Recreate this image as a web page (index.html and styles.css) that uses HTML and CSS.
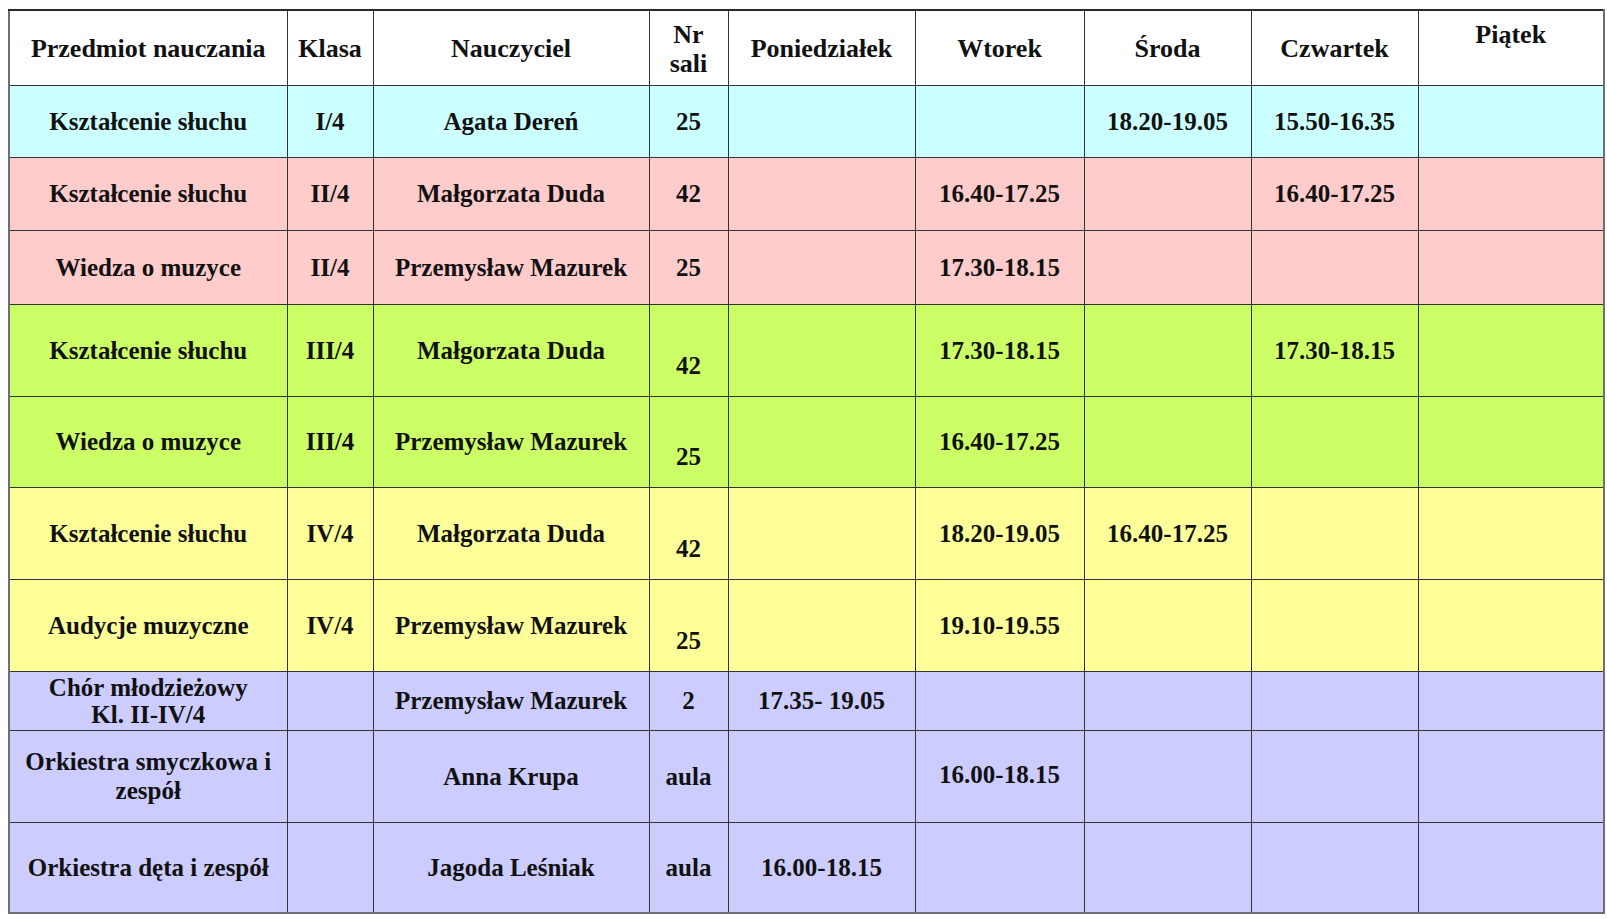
FILE: index.html
```html
<!DOCTYPE html>
<html lang="pl">
<head>
<meta charset="utf-8">
<title>Plan zajęć</title>
<link rel="stylesheet" href="styles.css">
</head>
<body>
<table class="plan">
  <colgroup>
    <col class="c1"><col class="c2"><col class="c3"><col class="c4"><col class="c5"><col class="c6"><col class="c7"><col class="c8"><col class="c9">
  </colgroup>
  <tr class="head">
    <td>Przedmiot nauczania</td><td>Klasa</td><td>Nauczyciel</td><td>Nr<br>sali</td><td>Poniedziałek</td><td>Wtorek</td><td>Środa</td><td>Czwartek</td><td class="top">Piątek</td>
  </tr>
  <tr class="cyan r72">
    <td>Kształcenie słuchu</td><td>I/4</td><td>Agata Dereń</td><td>25</td><td></td><td></td><td>18.20-19.05</td><td>15.50-16.35</td><td></td>
  </tr>
  <tr class="pink r73">
    <td>Kształcenie słuchu</td><td>II/4</td><td>Małgorzata Duda</td><td>42</td><td></td><td>16.40-17.25</td><td></td><td>16.40-17.25</td><td></td>
  </tr>
  <tr class="pink r74">
    <td>Wiedza o muzyce</td><td>II/4</td><td>Przemysław Mazurek</td><td>25</td><td></td><td>17.30-18.15</td><td></td><td></td><td></td>
  </tr>
  <tr class="green r92">
    <td>Kształcenie słuchu</td><td>III/4</td><td>Małgorzata Duda</td><td class="low">42</td><td></td><td>17.30-18.15</td><td></td><td>17.30-18.15</td><td></td>
  </tr>
  <tr class="green r91">
    <td>Wiedza o muzyce</td><td>III/4</td><td>Przemysław Mazurek</td><td class="low">25</td><td></td><td>16.40-17.25</td><td></td><td></td><td></td>
  </tr>
  <tr class="yellow r92">
    <td>Kształcenie słuchu</td><td>IV/4</td><td>Małgorzata Duda</td><td class="low">42</td><td></td><td>18.20-19.05</td><td>16.40-17.25</td><td></td><td></td>
  </tr>
  <tr class="yellow r92">
    <td>Audycje muzyczne</td><td>IV/4</td><td>Przemysław Mazurek</td><td class="low">25</td><td></td><td>19.10-19.55</td><td></td><td></td><td></td>
  </tr>
  <tr class="lav r58">
    <td class="tight">Chór młodzieżowy<br>Kl. II-IV/4</td><td></td><td>Przemysław Mazurek</td><td>2</td><td>17.35- 19.05</td><td></td><td></td><td></td><td></td>
  </tr>
  <tr class="lav r92">
    <td>Orkiestra smyczkowa i zespół</td><td></td><td>Anna Krupa</td><td>aula</td><td></td><td class="up">16.00-18.15</td><td></td><td></td><td></td>
  </tr>
  <tr class="lav r91">
    <td>Orkiestra dęta i zespół</td><td></td><td>Jagoda Leśniak</td><td>aula</td><td>16.00-18.15</td><td></td><td></td><td></td><td></td>
  </tr>
</table>
</body>
</html>
```

FILE: styles.css
```css
html, body {
  background: #ffffff;
}
body {
  margin: 9px 0 0 8px;
  font-family: "Liberation Serif", "Times New Roman", serif;
}
.plan {
  border-collapse: collapse;
  table-layout: fixed;
  width: 1595px;
  border-top: 2px solid #2a2a2a;
  border-left: 2px solid #6e6e78;
  border-right: 2px solid #6e6e78;
  border-bottom: 2px solid #6e6e78;
}
.c1 { width: 278px; }
.c2 { width: 86px; }
.c3 { width: 276px; }
.c4 { width: 79px; }
.c5 { width: 187px; }
.c6 { width: 169px; }
.c7 { width: 167px; }
.c8 { width: 167px; }
.c9 { width: 186px; }
.plan td {
  border: 1px solid #333338;
  padding: 0 4px;
  text-align: center;
  vertical-align: middle;
  font-weight: bold;
  font-size: 25px;
  line-height: 29px;
  color: #111111;
}
.head { height: 75px; background: #ffffff; }
.plan .head td { font-size: 26px; line-height: 29px; padding-top: 2px; }
.plan .head td.top { vertical-align: top; padding-top: 9px; }
.r72 { height: 72px; }
.r73 { height: 73px; }
.r74 { height: 74px; }
.r92 { height: 92px; }
.r91 { height: 91px; }
.r58 { height: 59px; }
.cyan { background: #ccffff; }
.pink { background: #ffcccc; }
.green { background: #ccff66; }
.yellow { background: #ffff99; }
.lav { background: #ccccff; }
.plan td.low { padding-top: 30px; }
.plan td.tight { line-height: 27px; }
.plan td.up { padding-bottom: 3px; }
```
